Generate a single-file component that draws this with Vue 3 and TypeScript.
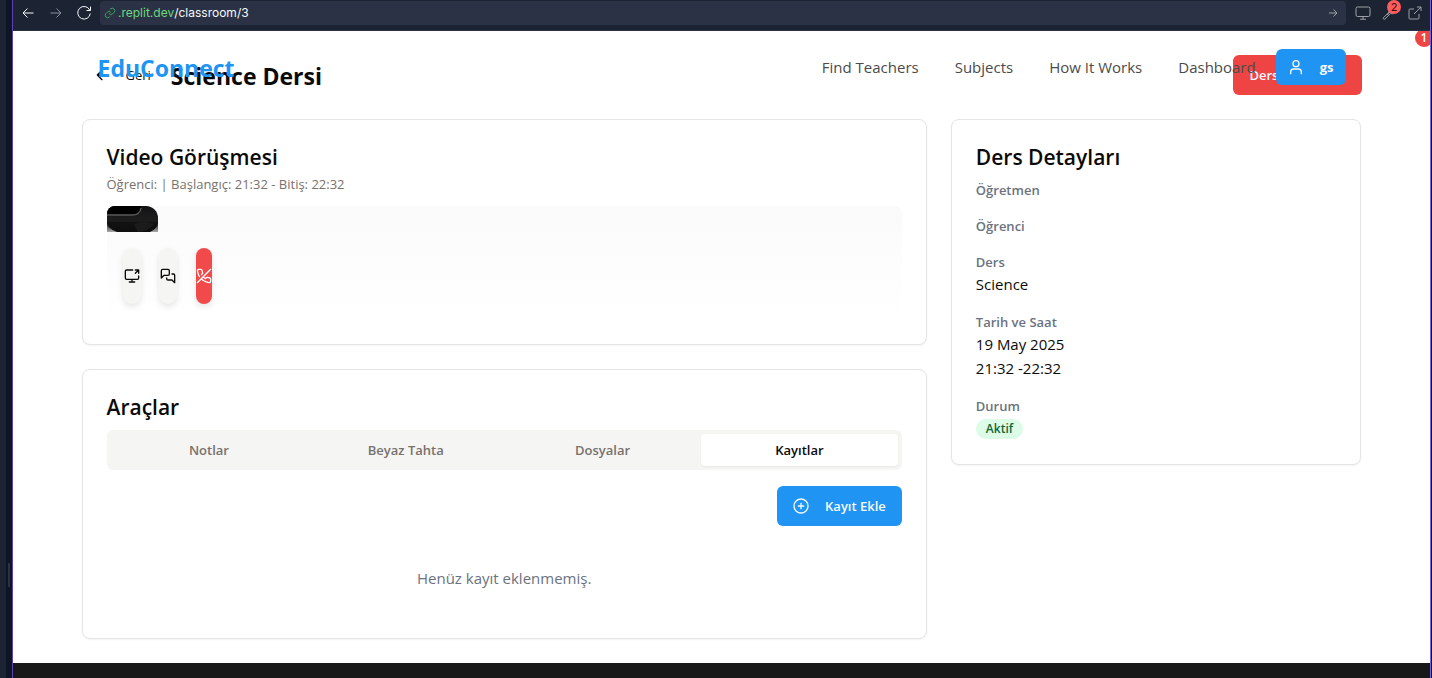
<script setup lang="ts">
import { ref } from 'vue'

const links: string[] = ['Find Teachers', 'Subjects', 'How It Works', 'Dashboard']
const tabs: string[] = ['Notlar', 'Beyaz Tahta', 'Dosyalar', 'Kayıtlar']
const activeTab = ref('Kayıtlar')
const address = ref('/classroom/3')

interface Detail {
  label: string
  values: string[]
  badge?: string
}

const details: Detail[] = [
  { label: 'Öğretmen', values: [] },
  { label: 'Öğrenci', values: [] },
  { label: 'Ders', values: ['Science'] },
  { label: 'Tarih ve Saat', values: ['19 May 2025', '21:32 -22:32'] },
  { label: 'Durum', values: [], badge: 'Aktif' },
]
</script>

<template>
  <div class="workspace">
    <div class="gutter"><span class="grip"></span></div>
    <div class="pane">
      <div class="toolbar">
        <button class="tool" aria-label="Back">
          <svg width="12" height="12" viewBox="0 0 12 12"><path d="M11.5 6H1M5.5 1.5L1 6l4.500 4.500" /></svg>
        </button>
        <button class="tool dim" aria-label="Forward">
          <svg width="12" height="12" viewBox="0 0 12 12"><path d="M.5 6H11M6.500 1.500L11 6l-4.500 4.500" /></svg>
        </button>
        <button class="tool reload" aria-label="Reload">
          <svg width="16" height="16" viewBox="0 0 16 16"><path d="M13.700 5A6.300 6.300 0 1 0 14.300 8.500M14.500 1.500V5.500h-4" /></svg>
        </button>
        <div class="address">
          <svg class="chain" width="12" height="12" viewBox="0 0 24 24"><path d="M10 13a5 5 0 0 0 7.500.5l3-3a5 5 0 0 0-7-7l-1.700 1.700M14 11a5 5 0 0 0-7.500-.5l-3 3a5 5 0 0 0 7 7l1.700-1.700" /></svg>
          <span class="host">.replit.dev</span>
          <input v-model="address" class="path" type="text" aria-label="Path" />
          <button class="go" aria-label="Go">
            <svg width="10" height="10" viewBox="0 0 10 10"><path d="M1 5h8M5.500 1.500L9 5 5.500 8.500" /></svg>
          </button>
        </div>
        <button class="tool grey monitor" aria-label="Devices">
          <svg width="16" height="14" viewBox="0 0 16 14"><rect x="1" y="1" width="14" height="9.500" rx="1.500" /><path d="M8 10.500V13M5 13.200h6" /></svg>
        </button>
        <button class="tool grey wrench" aria-label="Developer tools">
          <svg width="14" height="14" viewBox="0 0 14 14"><path d="M8 2.500a3.500 3.500 0 0 0-1 3.800L1.500 11.500a1 1 0 0 0 1.500 1.500l5.500-5.500a3.500 3.500 0 0 0 4-1M10 4L5 9" /></svg>
          <span class="count">2</span>
        </button>
        <button class="tool grey external" aria-label="Open in new tab">
          <svg width="14" height="14" viewBox="0 0 14 14"><path d="M6 3H2a1 1 0 0 0-1 1v8a1 1 0 0 0 1 1h8a1 1 0 0 0 1-1V8M9 1h4v4M13 1L6 8" /></svg>
        </button>
      </div>

      <div class="site">
        <header class="header">
          <div class="header-inner">
            <a class="brand" href="#">EduConnect</a>
            <nav class="nav">
              <a v-for="link in links" :key="link" href="#">{{ link }}</a>
            </nav>
            <button class="btn user">
              <svg class="icon" width="16" height="16" viewBox="0 0 24 24"><circle cx="12" cy="7" r="4.500" /><path d="M4 22v-2.500a4.500 4.500 0 0 1 4.500-4.500h7a4.500 4.500 0 0 1 4.500 4.500V22" /></svg>
              gs
            </button>
          </div>
        </header>
        <span class="alert">1</span>

        <main class="main">
          <div class="heading">
            <button class="back">
              <svg class="icon" width="16" height="16" viewBox="0 0 24 24"><path d="m12 19-7-7 7-7M19 12H5" /></svg>
              Geri
            </button>
            <h1>Science Dersi</h1>
            <button class="btn end">Dersi Sonlandır</button>
          </div>

          <div class="grid">
            <div class="column">
              <section class="card">
                <h2>Video Görüşmesi</h2>
                <p class="sub">Öğrenci: | Başlangıç: 21:32 - Bitiş: 22:32</p>
                <div class="video">
                  <div class="preview">
                    <svg width="51" height="26" viewBox="0 0 51 26">
                      <defs>
                        <linearGradient id="shell" x1="0" y1="0" x2="0" y2="1"><stop offset="0" stop-color="#121214" /><stop offset=".5" stop-color="#1d1d1e" /><stop offset="1" stop-color="#111" /></linearGradient>
                        <linearGradient id="corner" x1="0" y1="0" x2="0" y2="1"><stop offset="0" stop-color="#222" /><stop offset="1" stop-color="#aaa" /></linearGradient>
                      </defs>
                      <rect width="51" height="26" fill="url(#shell)" />
                      <path d="M0 0h34v2q-1 6-8 6H0z" fill="#000" />
                      <path d="M0 9h25q8 0 9-7" fill="none" stroke="#555" stroke-width="1.500" />
                      <path d="M0 16h51v10H0z" fill="#0d0d0d" opacity=".6" />
                      <path d="M27 18q10-4 20 0-6 8-16 8-3-4-4-8z" fill="#1b1b1b" />
                      <path d="M0 17q1 6 10 9H0zM51 17q-1 6-8 9h8z" fill="url(#corner)" />
                    </svg>
                  </div>
                  <div class="controls">
                    <button class="pill" aria-label="Ekran paylaş">
                      <svg class="icon" width="16" height="16" viewBox="0 0 24 24"><path d="M13 3H4a2 2 0 0 0-2 2v10a2 2 0 0 0 2 2h16a2 2 0 0 0 2-2v-3M8 21h8M12 17v4M17 8l5-5M17 3h5v5" /></svg>
                    </button>
                    <button class="pill" aria-label="Sohbet">
                      <svg class="icon" width="16" height="16" viewBox="0 0 24 24"><path d="M14 9a2 2 0 0 1-2 2H6l-4 4V4a2 2 0 0 1 2-2h8a2 2 0 0 1 2 2zM18 9h2a2 2 0 0 1 2 2v11l-4-4h-6a2 2 0 0 1-2-2v-1" /></svg>
                    </button>
                    <button class="pill hangup" aria-label="Görüşmeyi bitir">
                      <svg class="icon" width="16" height="16" viewBox="0 0 24 24"><path d="M10.680 13.310a16 16 0 0 0 3.410 2.600l1.270-1.270a2 2 0 0 1 2.110-.45 12.840 12.840 0 0 0 2.810.7 2 2 0 0 1 1.720 2v3a2 2 0 0 1-2.180 2 19.790 19.790 0 0 1-8.630-3.070 19.420 19.420 0 0 1-3.330-2.670m-2.670-3.340a19.790 19.790 0 0 1-3.070-8.630A2 2 0 0 1 4.110 2h3a2 2 0 0 1 2 1.720 12.840 12.840 0 0 0 .7 2.810 2 2 0 0 1-.45 2.110L8.090 9.910M22 2 2 22" /></svg>
                    </button>
                  </div>
                </div>
              </section>

              <section class="card">
                <h2>Araçlar</h2>
                <div class="tabs" role="tablist">
                  <button
                    v-for="tab in tabs"
                    :key="tab"
                    class="tab"
                    :class="{ active: tab === activeTab }"
                    role="tab"
                    :aria-selected="tab === activeTab"
                    @click="activeTab = tab"
                  >
                    {{ tab }}
                  </button>
                </div>
                <div class="actions">
                  <button class="btn add">
                    <svg class="icon" width="16" height="16" viewBox="0 0 24 24"><circle cx="12" cy="12" r="10.500" /><path d="M8 12h8M12 8v8" /></svg>
                    Kayıt Ekle
                  </button>
                </div>
                <p class="empty">Henüz kayıt eklenmemiş.</p>
              </section>
            </div>

            <section class="card">
              <h2>Ders Detayları</h2>
              <dl class="details">
                <div v-for="item in details" :key="item.label">
                  <dt>{{ item.label }}</dt>
                  <dd v-for="value in item.values" :key="value">{{ value }}</dd>
                  <dd v-if="item.badge" class="status"><span class="badge">{{ item.badge }}</span></dd>
                </div>
              </dl>
            </section>
          </div>
        </main>
        <footer class="footer"></footer>
      </div>
    </div>
  </div>
</template>

<style>
body {
  background: #0e1525;
}
</style>

<style scoped>
.workspace,
.workspace * {
  box-sizing: border-box;
}
.workspace {
  display: flex;
  height: 100vh;
  overflow: hidden;
  font-family: 'Open Sans', 'Noto Sans', sans-serif;
  font-size: 15px;
  line-height: 24px;
  color: #0c0a09;
}
button,
input {
  font: inherit;
  color: inherit;
  border: 0;
  background: none;
  padding: 0;
  margin: 0;
}
button {
  cursor: pointer;
}
a {
  color: inherit;
  text-decoration: none;
}
h1,
h2,
p,
dl,
dd {
  margin: 0;
}
svg {
  display: block;
  flex: none;
  fill: none;
  stroke: currentColor;
}
.icon {
  stroke-width: 2;
  stroke-linecap: round;
  stroke-linejoin: round;
}
.gutter {
  flex: none;
  position: relative;
  width: 12px;
  background: #0e1525;
  border-left: 6px solid #1c2333;
}
.grip {
  position: absolute;
  left: 2px;
  top: 563px;
  width: 2px;
  height: 24px;
  background: #2b3245;
}
.pane {
  flex: 1;
  min-width: 0;
  display: flex;
  flex-direction: column;
  border-left: 1px solid #5b40b8;
  border-right: 1px solid #7d66d9;
  margin-right: 1px;
}
.toolbar {
  flex: none;
  display: flex;
  align-items: center;
  height: 31px;
  padding: 0 8px 4px 1px;
  background: #1c2333;
  border-bottom: 1px solid #2b3245;
  color: #f5f9fc;
  font-family: Inter, 'Liberation Sans', sans-serif;
}
.tool {
  flex: none;
  position: relative;
  display: flex;
  align-items: center;
  justify-content: center;
  width: 28px;
  height: 24px;
}
.tool.dim {
  color: #8a90a0;
}
.tool.reload {
  margin-right: 2px;
}
.tool.grey {
  width: 26px;
  color: #9da2a6;
}
.tool.monitor {
  margin-left: 4px;
}
.tool.external {
  margin-right: -6px;
}
.address {
  flex: 1;
  min-width: 0;
  display: flex;
  align-items: center;
  height: 24px;
  padding: 0 8px 0 4px;
  border-radius: 4px;
  background: #2b3245;
  font-size: 12px;
}
.chain {
  color: #3fa35a;
  stroke-width: 2;
  margin-right: 2px;
}
.host {
  color: #6cd97e;
}
.path {
  flex: 1;
  min-width: 0;
  outline: none;
}
.go {
  color: #9da2a6;
}
.count {
  position: absolute;
  left: 11px;
  top: -1px;
  width: 14px;
  height: 14px;
  border-radius: 7px;
  background: #ff5c5c;
  color: #3b0a0a;
  font-size: 11px;
  line-height: 14px;
  text-align: center;
}
.site {
  flex: 1;
  min-height: 0;
  position: relative;
  display: flex;
  flex-direction: column;
  overflow: hidden;
  background: #fff;
}
.header {
  position: absolute;
  z-index: 2;
  left: 0;
  right: 0;
  top: 0;
  padding: 18px 0;
}
.header-inner {
  display: flex;
  align-items: center;
  max-width: 1280px;
  margin: 0 auto;
  padding: 0 16px;
}
.brand {
  margin-right: auto;
  padding-top: 2px;
  color: #2094f3;
  font-size: 23px;
  font-weight: 700;
  line-height: 34px;
}
.nav {
  display: flex;
  gap: 36px;
  margin-right: 20px;
  color: #4b4b4b;
}
.btn {
  display: flex;
  align-items: center;
  gap: 16px;
  height: 40px;
  padding: 0 16px;
  border-radius: 6px;
  background: #2094f3;
  color: #f5faff;
  font-size: 13px;
  font-weight: 600;
  line-height: 20px;
  white-space: nowrap;
}
.user {
  height: 36px;
  padding: 0 12px;
  font-weight: 700;
}
.alert {
  position: absolute;
  z-index: 3;
  right: -3px;
  top: -2px;
  width: 18px;
  height: 18px;
  border-radius: 9px;
  background: #ef4444;
  color: #fff;
  font-size: 12px;
  font-weight: 600;
  line-height: 18px;
  text-align: center;
}
.main {
  width: 100%;
  max-width: 1280px;
  margin: 0 auto;
  padding: 24px 0;
}
.heading {
  display: flex;
  align-items: center;
  margin-bottom: 24px;
}
.back {
  display: flex;
  align-items: center;
  gap: 16px;
  padding: 0 12px;
  font-size: 13px;
  line-height: 36px;
}
h1 {
  margin-left: 8px;
  padding-top: 2px;
  font-size: 23px;
  font-weight: 700;
  line-height: 32px;
}
.end {
  margin-left: auto;
  background: #ef4444;
}
.grid {
  display: grid;
  grid-template-columns: repeat(3, minmax(0, 1fr));
  gap: 24px;
  align-items: start;
}
.column {
  grid-column: span 2;
  display: flex;
  flex-direction: column;
  gap: 24px;
}
.card {
  padding: 24px;
  border: 1px solid #e5e5e4;
  border-radius: 8px;
  background: #fff;
  box-shadow: 0 1px 2px rgba(0, 0, 0, 0.05);
}
h2 {
  padding-bottom: 2px;
  font-size: 21px;
  font-weight: 600;
  line-height: 26px;
}
.sub {
  color: #78716c;
  font-size: 13px;
  line-height: 24px;
}
.video {
  margin-top: 10px;
  height: 114px;
  border-radius: 8px;
  background: linear-gradient(#fafafa, #fff);
}
.preview {
  width: 51px;
  height: 26px;
  overflow: hidden;
  border-radius: 8px 12px 0 0;
}
.preview svg {
  stroke: none;
}
.controls {
  display: flex;
  gap: 18px;
  padding: 16px;
}
.pill {
  display: flex;
  align-items: center;
  justify-content: center;
  width: 18px;
  height: 56px;
  border-radius: 9px;
  background: #f5f5f4;
  box-shadow: 0 3px 6px rgba(0, 0, 0, 0.1);
}
.hangup {
  width: 16px;
  margin-left: 1px;
  border-radius: 8px;
  background: #f04a4a;
  color: #fff;
}
.tabs {
  display: grid;
  grid-template-columns: repeat(4, minmax(0, 1fr));
  margin-top: 8px;
  padding: 4px;
  border-radius: 6px;
  background: #f5f5f4;
}
.tab {
  border-radius: 4px;
  color: #78716c;
  font-size: 13px;
  font-weight: 600;
  line-height: 32px;
}
.tab.active {
  background: #fff;
  color: #0c0a09;
  box-shadow: 0 1px 2px rgba(0, 0, 0, 0.06);
}
.actions {
  display: flex;
  justify-content: flex-end;
  margin-top: 16px;
}
.empty {
  padding: 40px 0 24px;
  color: #6b7280;
  text-align: center;
}
.details {
  display: flex;
  flex-direction: column;
  gap: 16px;
  margin-top: 8px;
}
dt {
  color: #6b7280;
  font-size: 13px;
  font-weight: 600;
  line-height: 20px;
}
.status {
  display: flex;
  padding: 3px 0 1px;
}
.badge {
  padding: 0 10px;
  border-radius: 10px;
  background: #dcfce7;
  color: #166534;
  font-size: 12px;
  font-weight: 600;
  line-height: 20px;
}
.footer {
  flex: 1;
  background: #181818;
}
</style>
